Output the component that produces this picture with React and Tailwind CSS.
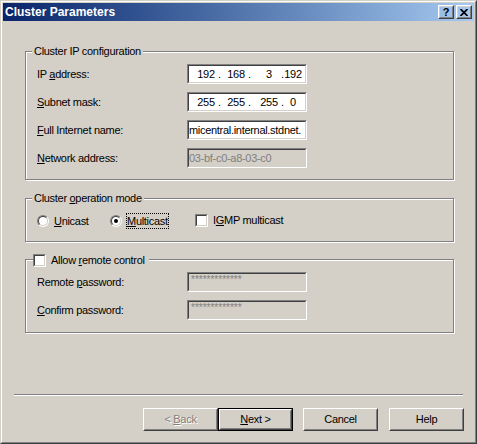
import React from 'react';

const Sunken = ({ className = '', disabled, children }) => (
  <div className={`border border-t-[#808080] border-l-[#808080] border-r-white border-b-white ${className}`}>
    <div
      className={`h-full border border-t-[#404040] border-l-[#404040] border-r-[#d4d0c8] border-b-[#d4d0c8] flex items-center overflow-hidden whitespace-nowrap ${
        disabled ? 'bg-[#d4d0c8]' : 'bg-white'
      }`}
    >
      {children}
    </div>
  </div>
);

const Raised = ({ className = '', children }) => (
  <div className={`border border-t-white border-l-white border-r-[#404040] border-b-[#404040] ${className}`}>
    <div className="h-full border border-t-[#d4d0c8] border-l-[#d4d0c8] border-r-[#808080] border-b-[#808080] flex items-center justify-center">
      {children}
    </div>
  </div>
);

const Radio = ({ checked }) => (
  <div className="w-[12px] h-[12px] rounded-full border border-t-[#808080] border-l-[#808080] border-r-white border-b-white">
    <div className="w-full h-full rounded-full border border-t-[#404040] border-l-[#404040] border-r-[#d4d0c8] border-b-[#d4d0c8] bg-white flex items-center justify-center">
      {checked && <div className="w-[4px] h-[4px] rounded-full bg-black" />}
    </div>
  </div>
);

const Check = () => (
  <div className="w-[13px] h-[13px] border border-t-[#808080] border-l-[#808080] border-r-white border-b-white">
    <div className="w-full h-full border border-t-[#404040] border-l-[#404040] border-r-[#d4d0c8] border-b-[#d4d0c8] bg-white" />
  </div>
);

const Group = ({ legend, className = '', children }) => (
  <div className={`relative border border-[#808080] shadow-[1px_1px_0_#fff,inset_1px_1px_0_#fff] ${className}`}>
    <div className="absolute left-[6px] top-[-8px] bg-[#d4d0c8] px-[2px] leading-[14px]">{legend}</div>
    {children}
  </div>
);

const Row = ({ label, children }) => (
  <div className="flex items-center h-[20px]">
    <div className="w-[150px]">{label}</div>
    {children}
  </div>
);

const IpField = ({ parts }) => (
  <Sunken className="w-[120px] h-[20px]">
    <div className="flex pl-[5px]">
      <span className="w-[24px] text-center">{parts[0]}</span>
      <span className="w-[3px] text-center">.</span>
      <span className="ml-[3px] w-[24px] text-center">{parts[1]}</span>
      <span className="w-[3px] text-center">.</span>
      <span className="ml-[6px] w-[24px] text-center">{parts[2]}</span>
      <span className="w-[3px] text-center">.</span>
      <span className="w-[18px] text-center">{parts[3]}</span>
    </div>
  </Sunken>
);

export default function App() {
  return (
    <div className="w-[477px] h-[444px] border border-t-[#d4d0c8] border-l-[#d4d0c8] border-r-[#404040] border-b-[#404040] bg-[#d4d0c8] font-['Liberation_Sans',Arial,sans-serif] text-[11px] tracking-[-0.3px] text-black">
      <div className="h-full border border-t-white border-l-white border-r-[#808080] border-b-[#808080] p-[1px] flex flex-col">
        {/* title bar */}
        <div className="h-[18px] flex items-center bg-gradient-to-r from-[#0a246a] to-[#a6caf0] pl-[2px] pr-[2px]">
          <span className="flex-1 text-white font-bold text-[12px] tracking-normal">Cluster Parameters</span>
          <Raised className="w-[16px] h-[14px]">
            <span className="font-bold text-[11px] leading-[10px] tracking-normal">?</span>
          </Raised>
          <Raised className="w-[16px] h-[14px] ml-[2px]">
            <svg width="8" height="7" viewBox="0 0 8 7">
              <path d="M0.5 0 L7.5 7 M7.5 0 L0.5 7" stroke="#000" strokeWidth="1.7" />
            </svg>
          </Raised>
        </div>

        <div className="flex-1 flex flex-col">
          <Group legend="Cluster IP configuration" className="ml-[22px] mr-[20px] mt-[30px]">
            <div className="pt-[12px] pb-[11px] pl-[11px] flex flex-col gap-[8px]">
              <Row label={<>IP <u>a</u>ddress:</>}>
                <IpField parts={['192', '168', '3', '192']} />
              </Row>
              <Row label={<><u>S</u>ubnet mask:</>}>
                <IpField parts={['255', '255', '255', '0']} />
              </Row>
              <Row label={<><u>F</u>ull Internet name:</>}>
                <Sunken className="w-[120px] h-[20px]">
                  <span>micentral.internal.stdnet.</span>
                </Sunken>
              </Row>
              <Row label={<><u>N</u>etwork address:</>}>
                <Sunken disabled className="w-[120px] h-[20px]">
                  <span className="text-[#808080]">03-bf-c0-a8-03-c0</span>
                </Sunken>
              </Row>
            </div>
          </Group>

          <Group legend={<>Cluster <u>o</u>peration mode</>} className="ml-[22px] mr-[20px] mt-[18px] h-[44px]">
            <div className="h-full flex items-center pl-[11px] pt-[1px]">
              <div className="w-[73px] flex items-center">
                <Radio />
                <span className="ml-[4px] border border-transparent leading-[14px]"><u>U</u>nicast</span>
              </div>
              <div className="w-[85px] flex items-center">
                <Radio checked />
                <span className="ml-[4px] border border-dotted border-black leading-[14px]"><u>M</u>ulticast</span>
              </div>
              <div className="flex items-center">
                <Check />
                <span className="ml-[5px]">I<u>G</u>MP multicast</span>
              </div>
            </div>
          </Group>

          <div className="relative ml-[22px] mr-[20px] mt-[17px] border border-[#808080] shadow-[1px_1px_0_#fff,inset_1px_1px_0_#fff]">
            <div className="absolute left-[7px] top-[-7px] h-[14px] bg-[#d4d0c8] pr-[4px] flex items-center">
              <Check />
              <span className="ml-[5px]">Allow <u>r</u>emote control</span>
            </div>
            <div className="pt-[12px] pb-[12px] pl-[11px] flex flex-col gap-[8px]">
              <Row label={<>Remote <u>p</u>assword:</>}>
                <Sunken disabled className="w-[120px] h-[20px]">
                  <span className="pl-[2px] text-[10px] tracking-normal text-[#808080] leading-none mb-[4px]">*************</span>
                </Sunken>
              </Row>
              <Row label={<><u>C</u>onfirm password:</>}>
                <Sunken disabled className="w-[120px] h-[20px]">
                  <span className="pl-[2px] text-[10px] tracking-normal text-[#808080] leading-none mb-[4px]">*************</span>
                </Sunken>
              </Row>
            </div>
          </div>

          <div className="mt-[61px] mx-[11px] h-[2px] border-t border-t-[#808080] border-b border-b-white" />

          <div className="mt-[12px] flex justify-end pr-[10px]">
            <Raised className="w-[75px] h-[23px]">
              <span className="text-[#808080] [text-shadow:1px_1px_0_#fff]">&lt; <u>B</u>ack</span>
            </Raised>
            <div className="w-[75px] h-[23px] border border-black">
              <Raised className="w-full h-full">
                <span><u>N</u>ext &gt;</span>
              </Raised>
            </div>
            <Raised className="w-[75px] h-[23px] ml-[10px]">
              <span>Cancel</span>
            </Raised>
            <Raised className="w-[75px] h-[23px] ml-[11px]">
              <span>Help</span>
            </Raised>
          </div>
        </div>
      </div>
    </div>
  );
}
